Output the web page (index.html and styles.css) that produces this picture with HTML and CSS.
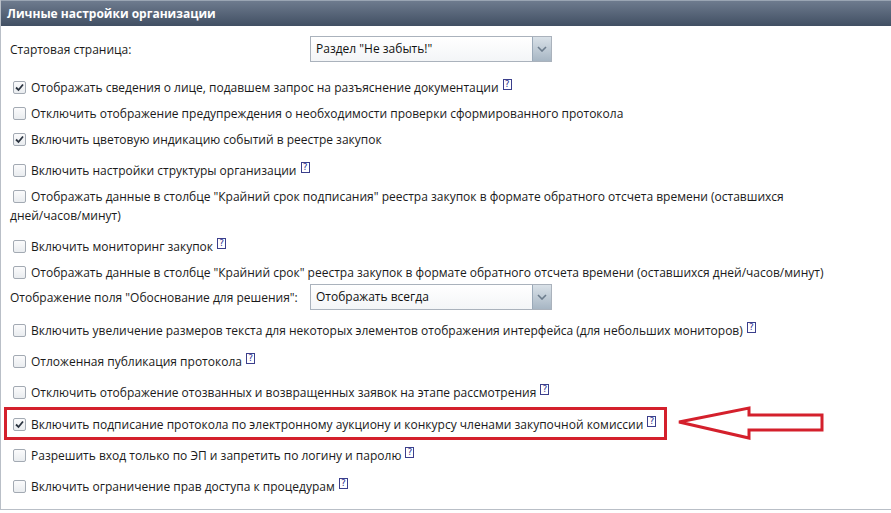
FILE: index.html
```html
<!DOCTYPE html>
<html lang="ru">
<head>
<meta charset="utf-8">
<title>Личные настройки организации</title>
<link rel="stylesheet" href="styles.css">
</head>
<body>
<div class="panel">
  <div class="panel-head">Личные настройки организации</div>
  <div class="panel-body">
    <div class="field">
      <span class="field-label">Стартовая страница:</span>
      <div class="select"><span class="select-text">Раздел "Не забыть!"</span><span class="select-btn"><svg width="10" height="6" viewBox="0 0 10 6"><path d="M1 1 L5 5 L9 1" fill="none" stroke="#6c7c8c" stroke-width="1.6"/></svg></span></div>
    </div>
    <div class="row help"><span class="cb checked"><svg width="11" height="11" viewBox="0 0 11 11"><path d="M2 5.5 L4.5 8 L9 2.5" fill="none" stroke="#2b3440" stroke-width="1.8"/></svg></span>Отображать сведения о лице, подавшем запрос на разъяснение документации <sup class="q">?</sup></div>
    <div class="row"><span class="cb"></span>Отключить отображение предупреждения о необходимости проверки сформированного протокола</div>
    <div class="row"><span class="cb checked"><svg width="11" height="11" viewBox="0 0 11 11"><path d="M2 5.5 L4.5 8 L9 2.5" fill="none" stroke="#2b3440" stroke-width="1.8"/></svg></span>Включить цветовую индикацию событий в реестре закупок</div>
    <div class="row help"><span class="cb"></span>Включить настройки структуры организации <sup class="q">?</sup></div>
    <div class="row"><span class="cb"></span>Отображать данные в столбце "Крайний срок подписания" реестра закупок в формате обратного отсчета времени (оставшихся <span class="nowrap">дней/часов/минут)</span></div>
    <div class="row help"><span class="cb"></span>Включить мониторинг закупок <sup class="q">?</sup></div>
    <div class="row"><span class="cb"></span>Отображать данные в столбце "Крайний срок" реестра закупок в формате обратного отсчета времени (оставшихся дней/часов/минут)</div>
    <div class="field field-tight">
      <span class="field-label">Отображение поля "Обоснование для решения":</span>
      <div class="select"><span class="select-text">Отображать всегда</span><span class="select-btn"><svg width="10" height="6" viewBox="0 0 10 6"><path d="M1 1 L5 5 L9 1" fill="none" stroke="#6c7c8c" stroke-width="1.6"/></svg></span></div>
    </div>
    <div class="row help"><span class="cb"></span>Включить увеличение размеров текста для некоторых элементов отображения интерфейса (для небольших мониторов) <sup class="q">?</sup></div>
    <div class="row help"><span class="cb"></span>Отложенная публикация протокола <sup class="q">?</sup></div>
    <div class="row help"><span class="cb"></span>Отключить отображение отозванных и возвращенных заявок на этапе рассмотрения <sup class="q">?</sup></div>
    <div class="highlight-wrap">
      <div class="row highlight"><span class="cb checked"><svg width="11" height="11" viewBox="0 0 11 11"><path d="M2 5.5 L4.5 8 L9 2.5" fill="none" stroke="#2b3440" stroke-width="1.8"/></svg></span>Включить подписание протокола по электронному аукциону и конкурсу членами закупочной комиссии <sup class="q">?</sup></div>
      <svg class="arrow" width="148" height="36" viewBox="0 0 148 36"><polygon points="2,16 72,2 72,9 145,9 145,24 72,24 72,32" fill="#fff" stroke="#d4202c" stroke-width="3" stroke-linejoin="miter"/></svg>
    </div>
    <div class="row help"><span class="cb"></span>Разрешить вход только по ЭП и запретить по логину и паролю <sup class="q">?</sup></div>
    <div class="row help"><span class="cb"></span>Включить ограничение прав доступа к процедурам <sup class="q">?</sup></div>
  </div>
</div>
</body>
</html>
```
FILE: styles.css
```css
html, body {
  margin: 0;
  padding: 0;
  background: #fff;
}
body {
  font-family: "Open Sans", "Noto Sans", sans-serif;
  font-size: 12px;
  color: #1a1a1a;
  width: 891px;
  height: 513px;
  overflow: hidden;
}
.panel {
  border-left: 1px solid #b9bfc7;
  border-bottom: 1px solid #b9bfc7;
  height: 510px;
  box-sizing: border-box;
}
.panel-head {
  height: 26px;
  box-sizing: border-box;
  border-top: 1px solid #9aa5b3;
  background: linear-gradient(#6e7b8e, #414f63);
  color: #fff;
  font-weight: bold;
  font-size: 12px;
  line-height: 25px;
  padding-left: 6px;
}
.panel-body {
  padding: 10px 10px 0 9px;
}
.field {
  display: flex;
  align-items: center;
  height: 26px;
  margin-bottom: 8px;
}
.field-tight {
  margin-top: -2px;
  margin-bottom: 3px;
}
.field-label {
  width: 300px;
  flex: none;
}
.select {
  display: flex;
  width: 242px;
  height: 26px;
  box-sizing: border-box;
  border: 1px solid #aab2bc;
  background: linear-gradient(#fff, #f3f5f7);
}
.select-text {
  flex: 1;
  padding-left: 5px;
  line-height: 24px;
  color: #111;
}
.select-btn {
  width: 18px;
  display: flex;
  align-items: center;
  justify-content: center;
  background: linear-gradient(#d9e1e8, #a7b6c4);
  border-left: 1px solid #9aa9b8;
}
.row {
  line-height: 19px;
  padding: 3px 0 4px 0;
}
.row.help {
  padding-top: 8px;
}
.nowrap {
  white-space: nowrap;
}
.cb {
  display: inline-block;
  width: 13px;
  height: 13px;
  box-sizing: border-box;
  border: 1px solid #a3aab3;
  border-radius: 2px;
  background: linear-gradient(#fbfbfc, #e9ecef);
  vertical-align: -2px;
  margin: 0 5px 0 3px;
  position: relative;
}
.cb svg {
  position: absolute;
  left: 0;
  top: 0;
}
.q {
  display: inline-block;
  font-size: 9px;
  line-height: 9px;
  width: 7px;
  height: 9px;
  border: 1px solid #3b3f8c;
  color: #2d3190;
  text-align: center;
  vertical-align: 5px;
  margin-left: 1px;
  font-family: "DejaVu Sans", sans-serif;
}
.highlight-wrap {
  display: flex;
  align-items: center;
  margin: 1px 0 -2px -6px;
}
.highlight {
  border: 3px solid #d4202c;
  padding: 5px 8px 3px 3px;
}
.arrow {
  margin: -2px 0 -2px 10px;
}
```
